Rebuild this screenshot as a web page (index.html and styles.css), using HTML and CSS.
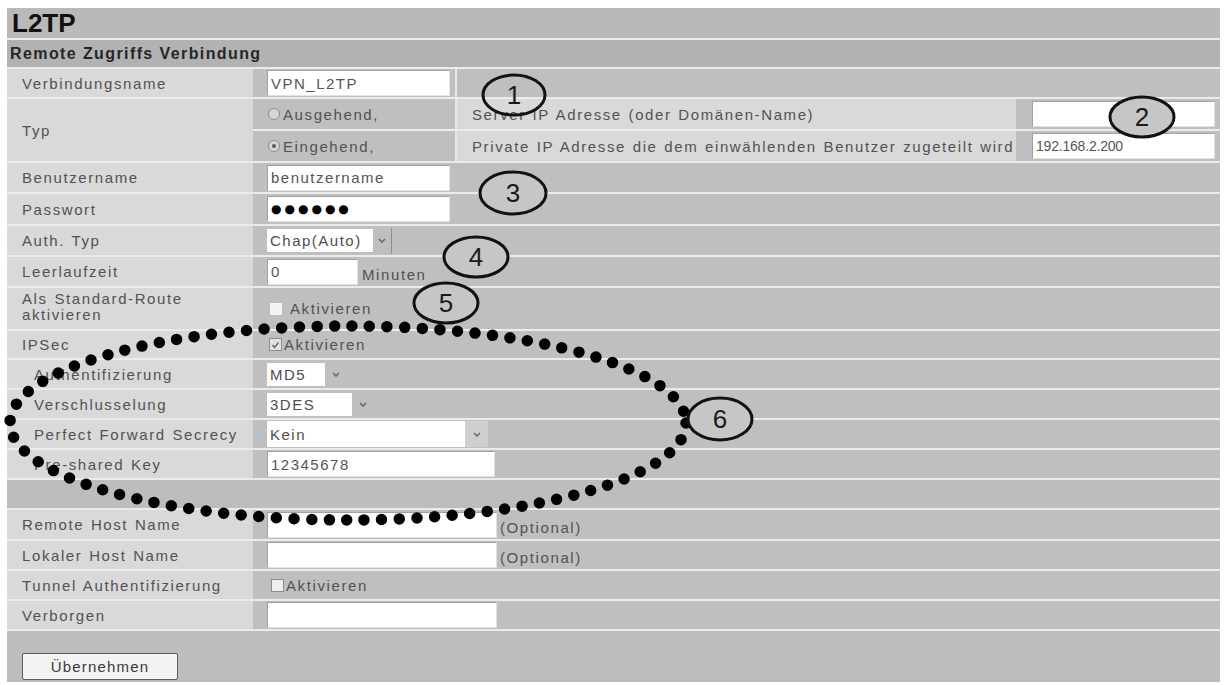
FILE: index.html
```html
<!DOCTYPE html>
<html lang="de">
<head>
<meta charset="utf-8">
<title>L2TP</title>
<link rel="stylesheet" href="styles.css">
</head>
<body>
<div class="screen">
  <div class="panel">
    <div class="title">L2TP</div>
    <div class="section">Remote Zugriffs Verbindung</div>

    <div class="label">Verbindungsname</div>
    <div class="value one"><input class="field w183" value="VPN_L2TP"></div>
    <div class="value two split"></div>

    <div class="label typ">Typ</div>
    <div class="value one radios"><span class="radio"></span><span class="txt">Ausgehend,</span></div>
    <div class="desc split">Server IP Adresse (oder Domänen-Name)</div>
    <div class="value one right"><input class="field w183" value=""></div>
    <div class="value one radios"><span class="radio on"></span><span class="txt">Eingehend,</span></div>
    <div class="desc split">Private IP Adresse die dem einwählenden Benutzer zugeteilt wird</div>
    <div class="value one right"><input class="field w183 ip" value="192.168.2.200"></div>

    <div class="label">Benutzername</div>
    <div class="value"><input class="field w183" value="benutzername"></div>

    <div class="label">Passwort</div>
    <div class="value"><input class="field w183 pw" value="●●●●●●"></div>

    <div class="label">Auth. Typ</div>
    <div class="value"><span class="select"><span class="sel-text w103">Chap(Auto)</span><span class="sel-arrow edge"><svg width="8" height="5" viewBox="0 0 8 5"><polyline points="1,1 4,4 7,1" fill="none" stroke="#6a6a6a" stroke-width="1.6"/></svg></span></span></div>

    <div class="label">Leerlaufzeit</div>
    <div class="value"><input class="field w91" value="0"><span class="txt low">Minuten</span></div>

    <div class="label twoline">Als Standard-Route<br>aktivieren</div>
    <div class="value"><span class="check plain"></span><span class="txt">Aktivieren</span></div>

    <div class="label">IPSec</div>
    <div class="value"><span class="check on"><svg width="9" height="8" viewBox="0 0 9 8"><polyline points="1.5,4 3.5,6.5 7.5,1.5" fill="none" stroke="#6a6a6a" stroke-width="1.5"/></svg></span><span class="txt">Aktivieren</span></div>

    <div class="label sub">Authentifizierung</div>
    <div class="value"><span class="select"><span class="sel-text w58">MD5</span><span class="sel-arrow gap"><svg width="8" height="5" viewBox="0 0 8 5"><polyline points="1,1 4,4 7,1" fill="none" stroke="#6a6a6a" stroke-width="1.6"/></svg></span></span></div>

    <div class="label sub">Verschlusselung</div>
    <div class="value"><span class="select"><span class="sel-text w85">3DES</span><span class="sel-arrow gap"><svg width="8" height="5" viewBox="0 0 8 5"><polyline points="1,1 4,4 7,1" fill="none" stroke="#6a6a6a" stroke-width="1.6"/></svg></span></span></div>

    <div class="label sub">Perfect Forward Secrecy</div>
    <div class="value"><span class="select"><span class="sel-text w198 tall">Kein</span><span class="sel-arrow boxed"><svg width="8" height="5" viewBox="0 0 8 5"><polyline points="1,1 4,4 7,1" fill="none" stroke="#6a6a6a" stroke-width="1.6"/></svg></span></span></div>

    <div class="label sub">Pre-shared Key</div>
    <div class="value"><input class="field w228" value="12345678"></div>

    <div class="blank"></div>

    <div class="label">Remote Host Name</div>
    <div class="value"><input class="field w230" value=""><span class="txt low opt">(Optional)</span></div>

    <div class="label">Lokaler Host Name</div>
    <div class="value"><input class="field w230" value=""><span class="txt low opt">(Optional)</span></div>

    <div class="label">Tunnel Authentifizierung</div>
    <div class="value"><span class="check box"></span><span class="txt">Aktivieren</span></div>

    <div class="label">Verborgen</div>
    <div class="value"><input class="field w230" value=""></div>

    <div class="actions"><button class="btn" type="button">Übernehmen</button></div>
  </div>

  <svg class="annot" width="1226" height="685" viewBox="0 0 1226 685">
    <ellipse class="dots" cx="348" cy="423" rx="338" ry="97"/>
    <ellipse class="ring" cx="514" cy="95" rx="31" ry="20" fill="none"/>
    <text class="num" x="514" y="104">1</text>
    <ellipse class="ring filled" cx="1142" cy="117" rx="32" ry="20"/>
    <text class="num" x="1142" y="126">2</text>
    <ellipse class="ring filled" cx="513" cy="193" rx="33" ry="21"/>
    <text class="num" x="513" y="202">3</text>
    <ellipse class="ring filled" cx="476" cy="257" rx="32" ry="20"/>
    <text class="num" x="476" y="266">4</text>
    <ellipse class="ring filled" cx="446" cy="303" rx="32" ry="20"/>
    <text class="num" x="446" y="312">5</text>
    <ellipse class="ring filled" cx="720" cy="419" rx="32" ry="21"/>
    <text class="num" x="720" y="428">6</text>
  </svg>
</div>
</body>
</html>
```

FILE: styles.css
```css
* { box-sizing: border-box; }
html, body { margin: 0; padding: 0; background: #ffffff; }
body { font-family: "Liberation Sans", Arial, sans-serif; }

.screen {
  position: relative;
  width: 1226px;
  height: 685px;
  padding: 8px 6px 0 7px;
  overflow: hidden;
}

.panel {
  display: grid;
  grid-template-columns: 246px 202px 561px 204px;
  grid-template-rows: 30px 27px 28px 30px 30px 29px 30px 29px 29px 41px 27px 28px 28px 28px 28px 28px 29px 28px 28px 28px 51px;
  row-gap: 2px;
  background: #ebebeb;
}

.title {
  grid-column: 1 / -1;
  background: #b9b9b9;
  color: #111;
  font-weight: bold;
  font-size: 26px;
  line-height: 31px;
  padding-left: 5px;
}

.section {
  grid-column: 1 / -1;
  background: #b2b2b2;
  color: #262626;
  font-weight: bold;
  font-size: 16px;
  letter-spacing: 1.4px;
  padding-left: 3px;
  display: flex;
  align-items: center;
}

.label, .txt, .desc {
  color: #525252;
  font-size: 15px;
  letter-spacing: 1.6px;
  word-spacing: 1px;
}

.label {
  background: #d9d9d9;
  padding-left: 15px;
  display: flex;
  align-items: center;
}
.label.sub { padding-left: 27px; }
.label.typ { grid-row: span 2; }
.label.twoline { align-items: flex-start; line-height: 16px; padding-top: 3px; }

.value {
  grid-column: span 3;
  background: #bfbfbf;
  display: flex;
  align-items: center;
  padding-left: 14px;
}
.value.one { grid-column: span 1; }
.value.two { grid-column: span 2; }
.value.right { padding-left: 16px; }
.value.radios { padding-left: 15px; }

.split { border-left: 2px solid #e6e6e6; }

.desc {
  background: #d9d9d9;
  display: flex;
  align-items: center;
  padding-left: 15px;
}

.field {
  height: 26px;
  border: 1px solid;
  border-color: #a2a2a2 #e2e2e2 #e2e2e2 #a2a2a2;
  background: #ffffff;
  font-family: "Liberation Sans", Arial, sans-serif;
  font-size: 15px;
  letter-spacing: 1.5px;
  color: #555555;
  padding: 0 3px;
  margin: 0;
  outline: none;
}
.field.ip { font-size: 14px; letter-spacing: -0.2px; }
.field.pw {
  font-family: "DejaVu Sans", sans-serif;
  font-size: 12px;
  letter-spacing: 3px;
  color: #000;
}
.w183 { width: 183px; }
.w91 { width: 91px; }
.w228 { width: 228px; }
.w230 { width: 230px; }

.txt.low { align-self: flex-end; padding-bottom: 3px; margin-left: 4px; }
.txt.opt { margin-left: 3px; }

.radio {
  width: 12px;
  height: 12px;
  border-radius: 50%;
  border: 1px solid #8c8c8c;
  background: #d6d6d6;
  margin-right: 3px;
  display: flex;
  align-items: center;
  justify-content: center;
  flex: none;
}
.radio.on::after {
  content: "";
  width: 4px;
  height: 4px;
  border-radius: 50%;
  background: #5a5a5a;
}

.check {
  flex: none;
  display: flex;
  align-items: center;
  justify-content: center;
  width: 13px;
  height: 13px;
  margin-right: 3px;
}
.check.plain { background: #f3f3f3; width: 12px; height: 12px; margin-left: 3px; margin-right: 8px; }
.check.on { border: 1px solid #8c8c8c; background: #e2e2e2; margin-left: 2px; margin-right: 2px; }
.check.box { border: 1px solid #8c8c8c; background: #efefef; margin-left: 4px; margin-right: 2px; }

.select {
  display: flex;
  align-items: center;
  height: 100%;
}
.sel-text {
  height: 23px;
  background: #ffffff;
  color: #4e4e4e;
  font-size: 15px;
  letter-spacing: 1.5px;
  display: flex;
  align-items: center;
  padding-left: 3px;
}
.sel-text.tall { height: 26px; }
.w103 { width: 106px; }
.w58 { width: 58px; }
.w85 { width: 85px; }
.w198 { width: 198px; }

.sel-arrow {
  display: flex;
  align-items: center;
  justify-content: center;
  height: 100%;
}
.sel-arrow.edge { width: 19px; border-right: 1px solid #8e8e8e; height: 26px; }
.sel-arrow.gap { width: 22px; }
.sel-arrow.boxed { width: 23px; height: 26px; background: #cfcfcf; }

.blank { grid-column: 1 / -1; background: #bdbdbd; }

.actions {
  grid-column: 1 / -1;
  background: #bdbdbd;
  padding: 22px 0 0 15px;
}
.btn {
  width: 156px;
  height: 27px;
  border: 1px solid #5a5a5a;
  border-radius: 2px;
  background: #f3f3f3;
  color: #3a3a3a;
  font-family: "Liberation Sans", Arial, sans-serif;
  font-size: 15px;
  letter-spacing: 1.2px;
  padding: 0;
}

.annot {
  position: absolute;
  top: 0;
  left: 0;
  pointer-events: none;
}
.dots {
  fill: none;
  stroke: #000;
  stroke-width: 11.5;
  stroke-linecap: round;
  stroke-dasharray: 0 17.6;
}
.ring { stroke: #111; stroke-width: 3; }
.ring.filled { fill: #c6c6c6; }
.num {
  font-family: "Liberation Sans", Arial, sans-serif;
  font-size: 26px;
  fill: #1a1a1a;
  text-anchor: middle;
}
```
